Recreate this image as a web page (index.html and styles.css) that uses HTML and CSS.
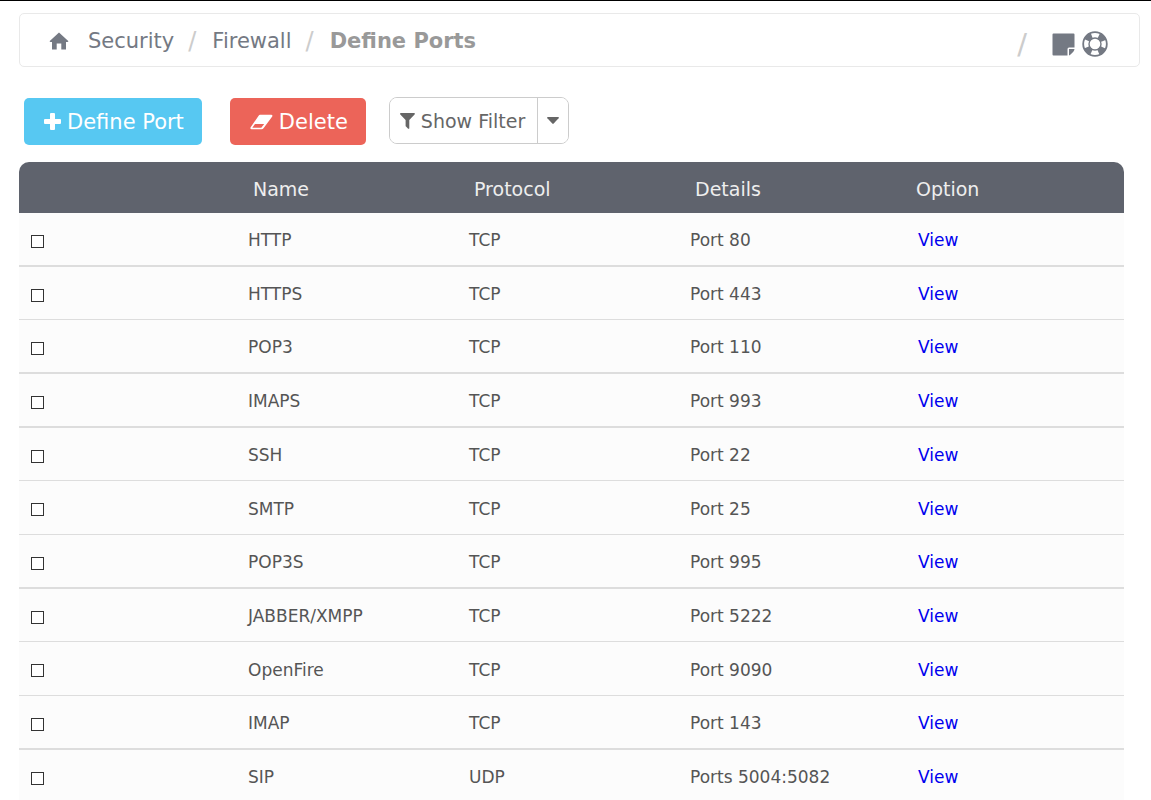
FILE: index.html
```html
<!DOCTYPE html>
<html lang="en">
<head>
    <meta charset="UTF-8">
    <meta name="viewport" content="width=device-width, initial-scale=1.0">
    <title>Define Ports</title>
    <link rel="stylesheet" href="styles.css">
</head>
<body>
    <nav class="topbar" aria-label="Breadcrumb">
        <ol class="breadcrumb">
            <li>
                <a href="#" aria-label="Home">
                    <svg class="icon-home" viewBox="0 0 20 18"><path d="M10 0.5 L19.5 9.2 L18.6 10 H17 V17.5 H12.3 V11.5 H7.7 V17.5 H3 V10 H1.4 L0.5 9.2 Z"/></svg>
                </a>
            </li>
            <li><a href="#">Security</a></li>
            <li><a href="#">Firewall</a></li>
            <li class="active">Define Ports</li>
        </ol>
        <div class="tools">
            <a href="#" aria-label="Notes">
                <svg class="icon-note" viewBox="0 0 23 23"><path d="M1.5 0.5 H21.5 Q22.5 0.5 22.5 1.5 V14.5 H17 Q15.5 14.5 15.5 16 V22.5 H1.5 Q0.5 22.5 0.5 21.5 V1.5 Q0.5 0.5 1.5 0.5 Z M17 16 H22.5 Q22.3 17.8 21.3 18.8 L18.8 21.3 Q18 22.2 17 22.5 Z"/></svg>
            </a>
            <a href="#" aria-label="Help">
                <svg class="icon-help" viewBox="0 0 26 26">
                    <circle cx="13" cy="13" r="11.8" stroke-width="1.8"/>
                    <circle cx="13" cy="13" r="6" stroke-width="1.4"/>
                    <circle cx="13" cy="13" r="9" stroke-width="6" stroke-dasharray="6.9 7.24" stroke-dashoffset="-3.62"/>
                </svg>
            </a>
        </div>
    </nav>

    <div class="actions">
        <button type="button" class="btn btn-add">
            <svg class="icon-plus" viewBox="0 0 17 17"><path d="M7 0 H10 Q11 0 11 1 V6 H16 Q17 6 17 7 V10 Q17 11 16 11 H11 V16 Q11 17 10 17 H7 Q6 17 6 16 V11 H1 Q0 11 0 10 V7 Q0 6 1 6 H6 V1 Q6 0 7 0 Z"/></svg>
            Define Port
        </button>
        <button type="button" class="btn btn-delete">
            <svg class="icon-eraser" viewBox="0 0 24 16"><path fill-rule="evenodd" d="M10.5 0.5 H22 Q24 0.5 23.2 2.2 L14.3 14.2 Q13.4 15.5 12 15.5 H1.8 Q-0.3 15.5 0.7 13.6 L8.8 1.7 Q9.6 0.5 10.5 0.5 Z M5.2 10 L2.4 14 H11.8 L14.8 10 Z"/></svg>
            Delete
        </button>
        <div class="btn-group">
            <button type="button" class="btn-filter">
                <svg class="icon-filter" viewBox="0 0 15 16"><path d="M0.8 0 H14.2 Q15.3 0.3 14.6 1.4 L9.3 7 V15.2 Q9.1 16.2 8.1 15.7 L6 13.6 Q5.6 13.2 5.6 12.7 V7 L0.3 1.4 Q-0.4 0.3 0.8 0 Z"/></svg>
                Show Filter
            </button>
            <button type="button" class="btn-caret" aria-label="Filter options">
                <svg class="icon-caret" viewBox="0 0 12 7"><path d="M0.7 0 H11.3 Q12.3 0.3 11.6 1.2 L6.7 6.6 Q6 7.2 5.3 6.6 L0.4 1.2 Q-0.3 0.3 0.7 0 Z"/></svg>
            </button>
        </div>
    </div>

    <table class="ports">
        <thead>
            <tr><th></th><th>Name</th><th>Protocol</th><th>Details</th><th>Option</th></tr>
        </thead>
        <tbody>
            <tr><td><input type="checkbox" aria-label="HTTP"></td><td>HTTP</td><td>TCP</td><td>Port 80</td><td><a href="#">View</a></td></tr>
            <tr><td><input type="checkbox" aria-label="HTTPS"></td><td>HTTPS</td><td>TCP</td><td>Port 443</td><td><a href="#">View</a></td></tr>
            <tr><td><input type="checkbox" aria-label="POP3"></td><td>POP3</td><td>TCP</td><td>Port 110</td><td><a href="#">View</a></td></tr>
            <tr><td><input type="checkbox" aria-label="IMAPS"></td><td>IMAPS</td><td>TCP</td><td>Port 993</td><td><a href="#">View</a></td></tr>
            <tr><td><input type="checkbox" aria-label="SSH"></td><td>SSH</td><td>TCP</td><td>Port 22</td><td><a href="#">View</a></td></tr>
            <tr><td><input type="checkbox" aria-label="SMTP"></td><td>SMTP</td><td>TCP</td><td>Port 25</td><td><a href="#">View</a></td></tr>
            <tr><td><input type="checkbox" aria-label="POP3S"></td><td>POP3S</td><td>TCP</td><td>Port 995</td><td><a href="#">View</a></td></tr>
            <tr><td><input type="checkbox" aria-label="JABBER/XMPP"></td><td>JABBER/XMPP</td><td>TCP</td><td>Port 5222</td><td><a href="#">View</a></td></tr>
            <tr><td><input type="checkbox" aria-label="OpenFire"></td><td>OpenFire</td><td>TCP</td><td>Port 9090</td><td><a href="#">View</a></td></tr>
            <tr><td><input type="checkbox" aria-label="IMAP"></td><td>IMAP</td><td>TCP</td><td>Port 143</td><td><a href="#">View</a></td></tr>
            <tr><td><input type="checkbox" aria-label="SIP"></td><td>SIP</td><td>UDP</td><td>Ports 5004:5082</td><td><a href="#">View</a></td></tr>
        </tbody>
    </table>
</body>
</html>
```
FILE: styles.css
```css
* {
    box-sizing: border-box;
}
html {
    overflow-x: hidden;
    scrollbar-width: none;
}
body {
    margin: 0;
    padding: 12px 11px 0 19px;
    border-top: 1px solid #000;
    background-color: #fff;
    color: #555;
    font-family: Verdana, "DejaVu Sans", sans-serif;
    font-size: 17px;
}
a {
    text-decoration: none;
}
svg {
    display: block;
    flex: none;
    fill: currentColor;
}
button {
    font-family: inherit;
    cursor: pointer;
}

/* breadcrumb bar */
.topbar {
    display: flex;
    justify-content: space-between;
    height: 54px;
    padding: 0 31px 0 29px;
    border: 1px solid #e9e9e9;
    border-radius: 5px;
    color: #747983;
    font-size: 21px;
}
.topbar a {
    color: inherit;
}
.breadcrumb {
    display: flex;
    align-items: center;
    margin: 0;
    padding: 2px 0 0;
    list-style: none;
}
.breadcrumb li {
    display: flex;
    align-items: center;
}
.breadcrumb li + li {
    margin-left: 19px;
}
.breadcrumb li + li + li {
    margin-left: 14px;
}
.breadcrumb li + li + li::before {
    content: "/";
    margin-right: 16px;
    color: #ccc;
    font-size: 24px;
    font-weight: normal;
    line-height: 24px;
}
.breadcrumb .active {
    color: #999;
    font-weight: bold;
}
.tools {
    display: flex;
    align-items: center;
    gap: 7px;
    padding-top: 8px;
}
.tools::before {
    content: "/";
    margin-right: 18px;
    color: #ccc;
    font-size: 29px;
}
.icon-home {
    width: 20px;
    height: 18px;
}
.icon-note {
    width: 23px;
    height: 23px;
}
.icon-help {
    width: 26px;
    height: 26px;
    fill: none;
    stroke: currentColor;
}

/* buttons */
.actions {
    display: flex;
    align-items: flex-start;
    padding: 30px 5px 17px;
}
.btn {
    display: flex;
    align-items: center;
    gap: 6px;
    height: 47px;
    margin: 1px 28px 0 0;
    padding: 0 18px 0 20px;
    border: 0;
    border-radius: 5px;
    color: #fff;
    font-size: 21px;
}
.btn-add {
    background-color: #57c8f2;
}
.btn-delete {
    background-color: #ec6459;
}
.btn-group {
    display: flex;
    height: 47px;
    margin-left: -5px;
    border: 1px solid #ccc;
    border-radius: 8px;
    overflow: hidden;
}
.btn-filter,
.btn-caret {
    display: flex;
    align-items: center;
    gap: 6px;
    padding: 0 12px 0 10px;
    border: 0;
    background-color: #fff;
    color: #666;
    font-size: 19px;
}
.btn-caret {
    padding: 0 9px;
    border-left: 1px solid #ccc;
}
.icon-plus {
    width: 17px;
    height: 17px;
}
.icon-eraser {
    width: 23px;
    height: 16px;
}
.icon-filter {
    width: 15px;
    height: 16px;
}
.icon-caret {
    width: 12px;
    height: 7px;
}

/* ports table */
.ports {
    width: calc(100% - 16px);
    border-collapse: separate;
    border-spacing: 0;
    table-layout: fixed;
    border-radius: 10px 10px 0 0;
    overflow: hidden;
}
.ports th {
    height: 51px;
    padding: 3px 13px 0;
    background-color: #5f636d;
    color: #eee;
    font-size: 19px;
    font-weight: normal;
    text-align: left;
}
.ports td {
    height: 54px;
    padding: 2px 8px 0;
    border-bottom: 1px solid #ddd;
    background-color: #fcfcfc;
}
.ports tr:nth-child(3n + 1) td,
.ports tr:nth-child(3) td {
    border-bottom-width: 2px;
}
.ports tr:nth-child(3n + 2) td {
    height: 53px;
}
.ports td:first-child {
    padding: 4px 12px 0;
}
.ports td:last-child {
    padding-left: 15px;
}
.ports td a {
    color: #0000ee;
}
.ports input {
    display: block;
    width: 13px;
    height: 13px;
    margin: 0;
    border: 1px solid #333;
    background-color: #fff;
    appearance: none;
}
.ports input:checked {
    background-color: #333;
}
```
